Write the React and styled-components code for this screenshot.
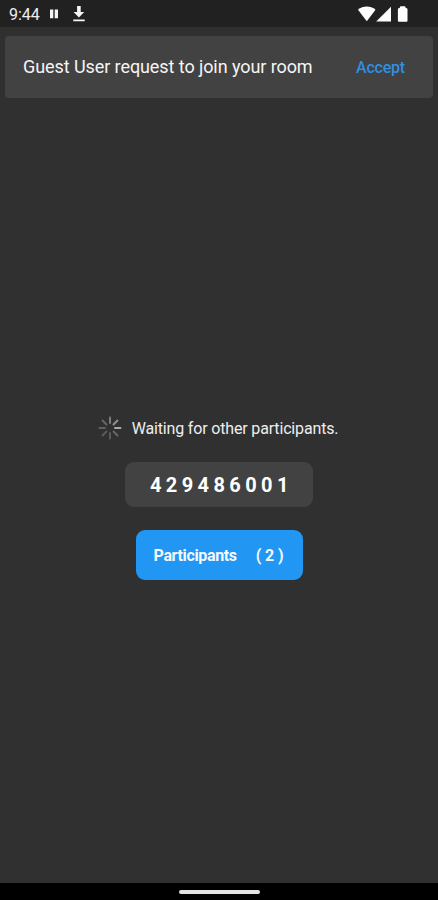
import React from 'react';
import styled, { createGlobalStyle } from 'styled-components';

const spokes = [1, 0.45, 0.35, 0.35, 0.4, 0.45, 0.65, 0.8];

const App = () => {
	return (
		<Screen>
			<GlobalStyle />
			<StatusBar>
				<StatusGroup>
					<Clock>9:44</Clock>
					<PauseIcon width='8' height='10' viewBox='0 0 8 10'>
						<path d='M0 0.5h3.3v8.7h-3.3zM4.7 0.5h3.3v8.7h-3.3z' />
					</PauseIcon>
					<DownloadIcon width='12' height='16' viewBox='0 0 12 16'>
						<path d='M4.1 0h3.6v6h3.5l-5.3 5.5l-5.3-5.5h3.5zM0.3 13.4h11.4v1.8h-11.4z' />
					</DownloadIcon>
				</StatusGroup>
				<svg width='52' height='18' viewBox='0 0 52 18' fill='#fff'>
					<path d='M0 3.8C5-0.6 12.5-0.6 17.5 3.8L8.8 15.3z' />
					<path d='M33 0.8v14.8h-14.8z' />
					<path d='M42.4 0.3h4.6l0.8 1.7q1.7 0 1.7 1.2v11.6q0 1-1 1h-7.6q-1 0-1-1v-11.6q0-1.2 1.7-1.2z' />
				</svg>
			</StatusBar>
			<RequestCard>
				<RequestText>Guest User request to join your room</RequestText>
				<AcceptButton>Accept</AcceptButton>
			</RequestCard>
			<Content>
				<Waiting>
					<svg width='24' height='24' viewBox='-12 -12 24 24'>
						{spokes.map((opacity, i) => (
							<path
								key={i}
								d='M5 0H10.5'
								stroke='#a8a8a8'
								strokeWidth='2'
								strokeLinecap='round'
								opacity={opacity}
								transform={`rotate(${i * 45})`}
							/>
						))}
					</svg>
					<WaitingText>Waiting for other participants.</WaitingText>
				</Waiting>
				<RoomCode>429486001</RoomCode>
				<ParticipantsButton>
					<span>Participants</span>
					<Count>( 2 )</Count>
				</ParticipantsButton>
			</Content>
			<NavBar>
				<HomeHandle />
			</NavBar>
		</Screen>
	);
};

export default App;

const GlobalStyle = createGlobalStyle`
	body {
		margin: 0;
		background: #303030;
	}
`;

const Screen = styled.div`
	box-sizing: border-box;
	display: flex;
	flex-direction: column;
	height: 100vh;
	overflow: hidden;
	background: #303030;
	color: #fff;
	font-family: Roboto, sans-serif;
`;

const StatusBar = styled.header`
	box-sizing: border-box;
	flex: none;
	display: flex;
	align-items: flex-start;
	justify-content: space-between;
	height: 27px;
	padding: 6px 28px 0 9px;
	background: #212121;
`;

const StatusGroup = styled.div`
	display: flex;
	fill: #f5f5f5;
`;

const Clock = styled.span`
	width: 41px;
	font-size: 16px;
	line-height: 17px;
	color: #eee;
`;

const PauseIcon = styled.svg`
	margin-top: 3px;
`;

const DownloadIcon = styled.svg`
	margin-left: 15px;
`;

const RequestCard = styled.section`
	box-sizing: border-box;
	flex: none;
	display: flex;
	align-items: center;
	justify-content: space-between;
	height: 62px;
	margin: 9px 5px 0;
	padding: 0 28px 0 18px;
	border-radius: 4px;
	background: #424242;
`;

const RequestText = styled.span`
	padding-bottom: 2px;
	font-size: 18px;
	letter-spacing: -0.08px;
	color: #f5f5f5;
	white-space: nowrap;
`;

const AcceptButton = styled.button`
	all: unset;
	font-size: 16px;
	font-weight: 500;
	letter-spacing: -0.2px;
	color: #2f8fe3;
`;

const Content = styled.main`
	flex: 1;
	display: flex;
	flex-direction: column;
	align-items: center;
	padding-top: 318px;
`;

const Waiting = styled.div`
	display: flex;
	align-items: center;
	gap: 10px;
	height: 24px;
	padding-right: 2px;
`;

const WaitingText = styled.span`
	padding-top: 2px;
	font-size: 16px;
	line-height: 24px;
	letter-spacing: -0.16px;
	color: #eee;
	white-space: nowrap;
`;

const RoomCode = styled.div`
	box-sizing: border-box;
	display: flex;
	align-items: center;
	width: 188px;
	height: 45px;
	margin-top: 22px;
	padding-left: 25px;
	border-radius: 9px;
	background: #424242;
	font-size: 20px;
	font-weight: 700;
	letter-spacing: 4.4px;
`;

const ParticipantsButton = styled.button`
	all: unset;
	box-sizing: border-box;
	display: flex;
	align-items: center;
	width: 167px;
	height: 50px;
	margin-top: 23px;
	padding: 0 18px;
	border-radius: 9px;
	background: #2196f3;
	color: #f3f9ff;
	font-size: 16px;
	font-weight: 700;
	letter-spacing: -0.35px;
	white-space: nowrap;
`;

const Count = styled.span`
	margin-left: 19px;
	letter-spacing: -0.1px;
`;

const NavBar = styled.footer`
	flex: none;
	display: flex;
	justify-content: center;
	height: 17px;
	background: #000;
`;

const HomeHandle = styled.div`
	width: 81px;
	height: 4px;
	margin-top: 7px;
	border-radius: 2px;
	background: #e4e4e4;
`;
